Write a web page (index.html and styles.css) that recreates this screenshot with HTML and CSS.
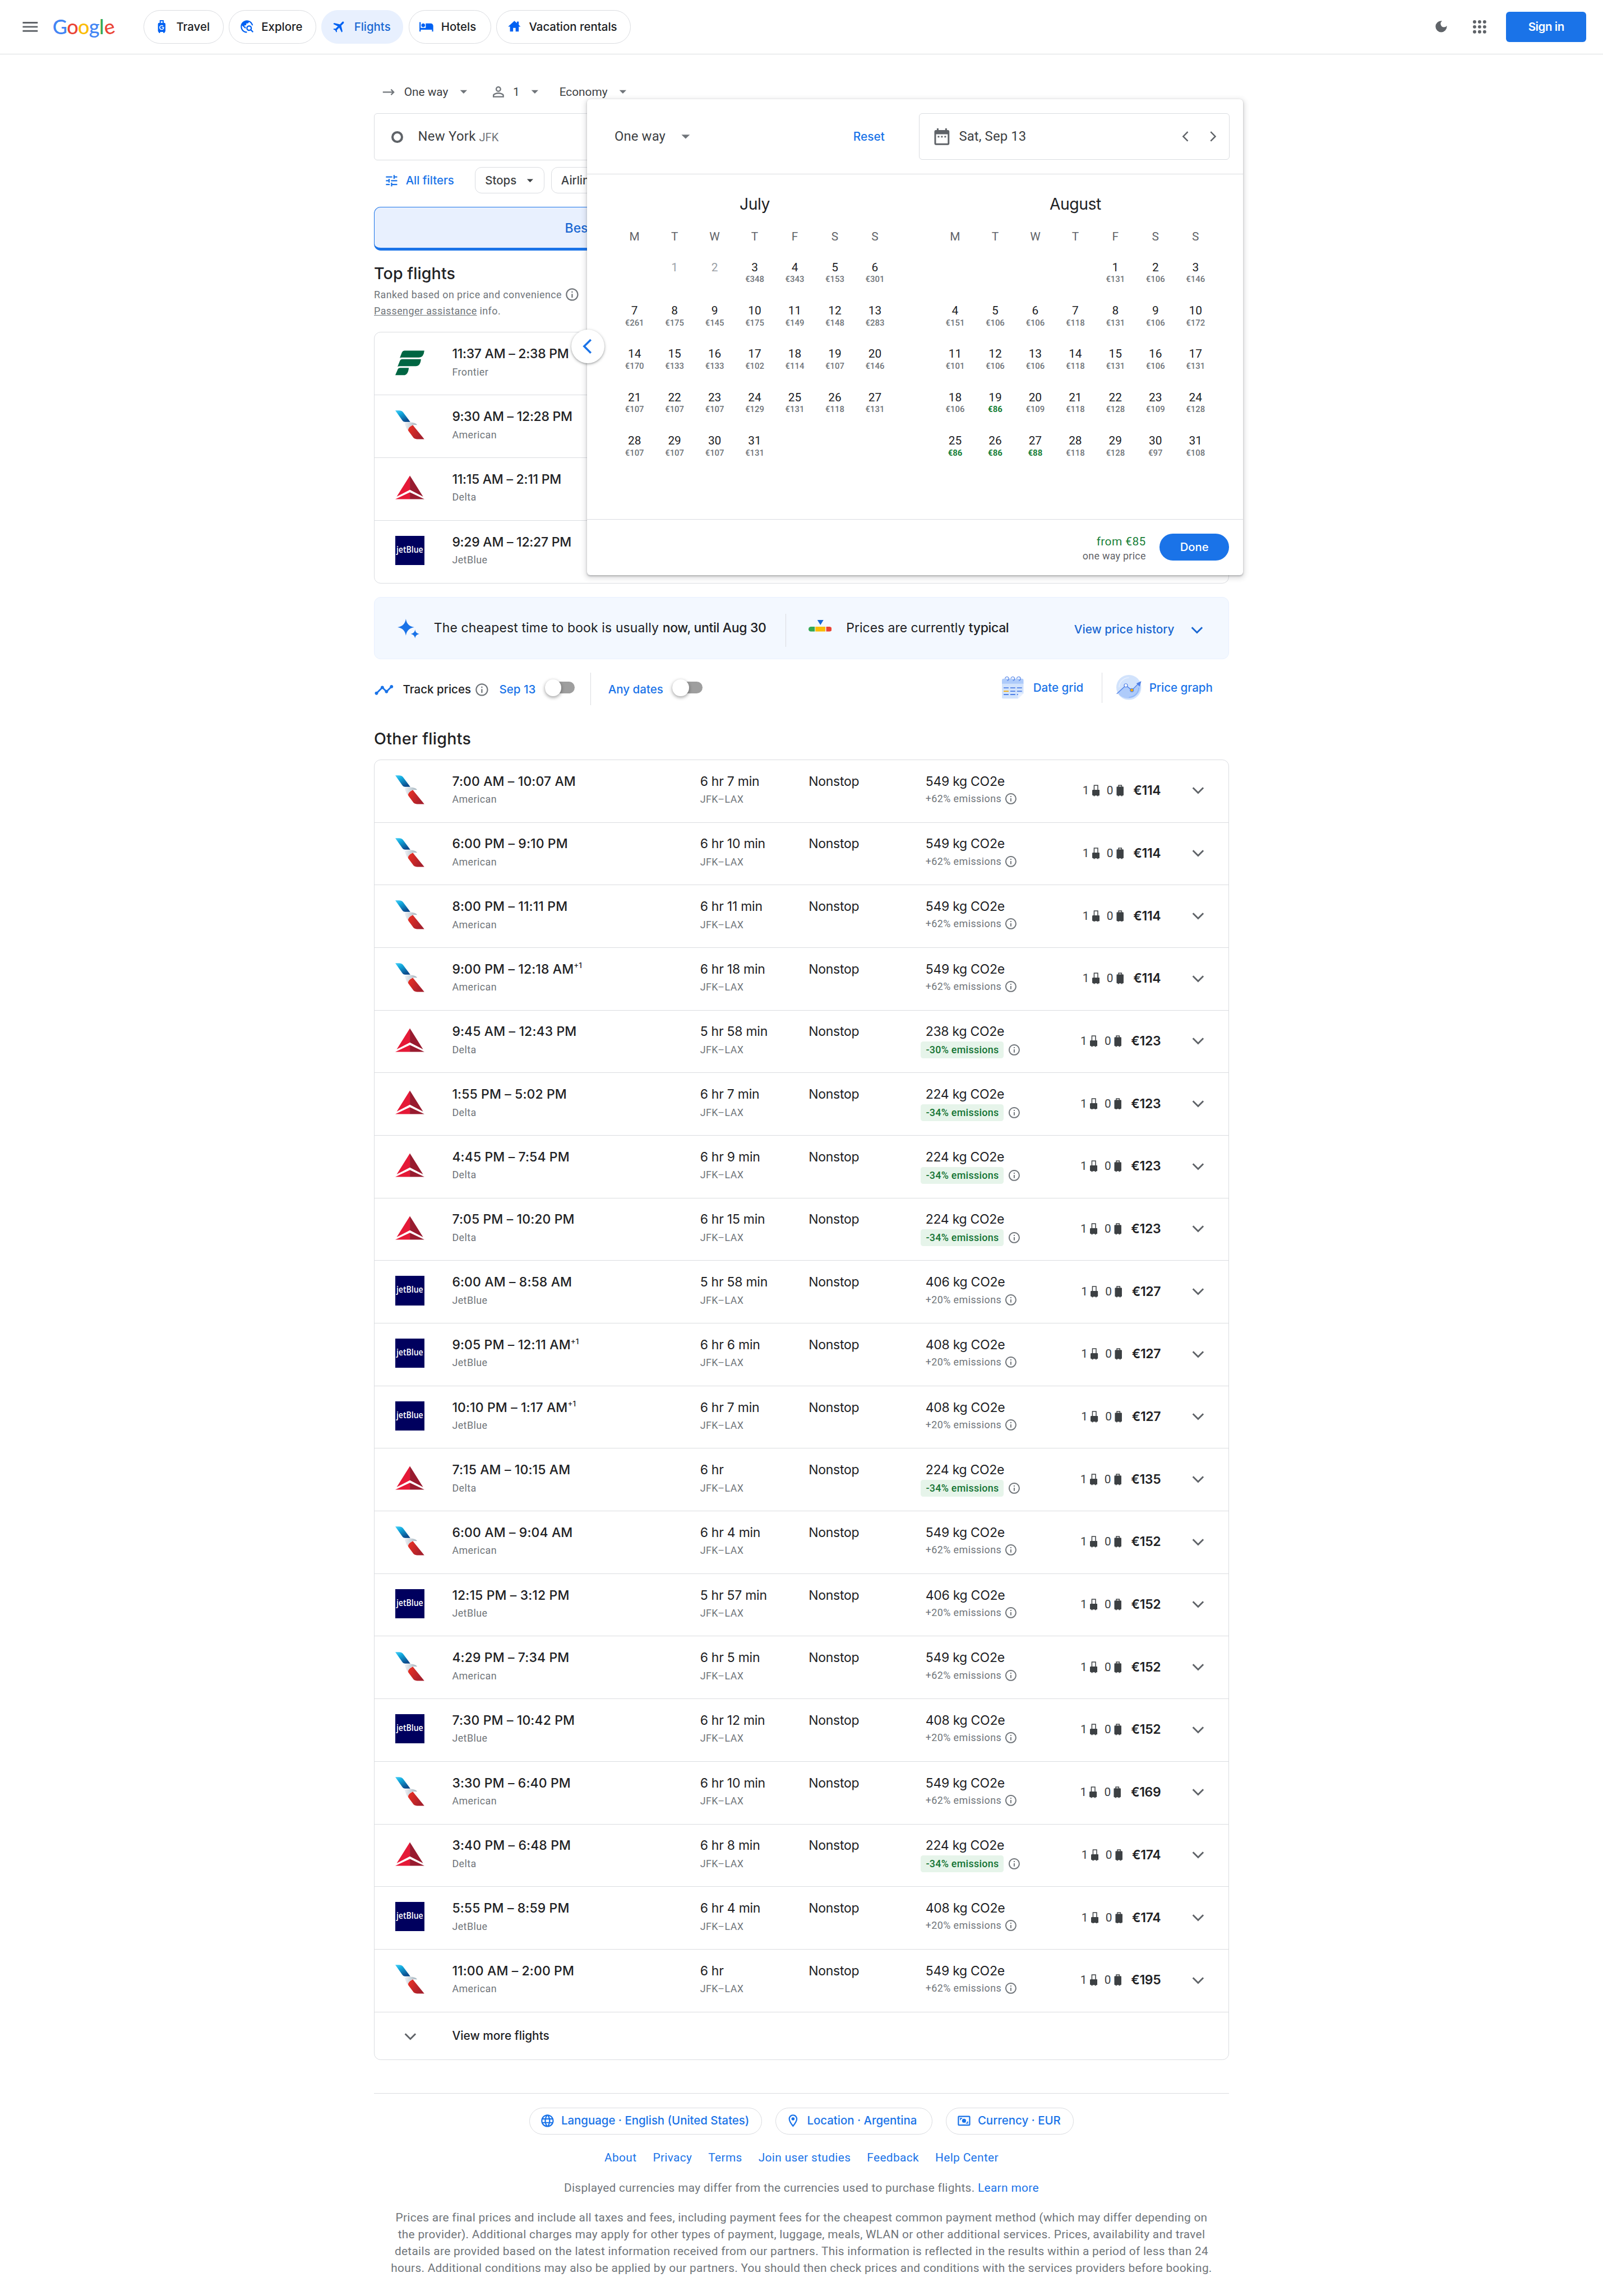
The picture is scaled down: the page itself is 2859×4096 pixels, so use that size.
FILE: index.html
```
<!DOCTYPE html>
<html lang="en">
<head>
<meta charset="utf-8">
<title>New York to Los Angeles | Google Flights</title>
<link rel="stylesheet" href="styles.css">
</head>
<body>
<svg class="defs" aria-hidden="true">
  <defs>
    <linearGradient id="aaBlue" x1="0" y1="0" x2=".6" y2="1"><stop offset="0" stop-color="#4ad0f7"/><stop offset=".35" stop-color="#12a9dd"/><stop offset="1" stop-color="#0b4a8c"/></linearGradient>
    <linearGradient id="aaGray" x1="0" y1="0" x2="1" y2="0"><stop offset="0" stop-color="#eef1f6"/><stop offset="1" stop-color="#a3b3bc"/></linearGradient>
    <linearGradient id="aaRed" x1="0" y1="0" x2="1" y2=".5"><stop offset="0" stop-color="#ee3124"/><stop offset="1" stop-color="#a51f2c"/></linearGradient>
  </defs>
  <symbol id="menu" viewBox="0 0 24 24"><path d="M3 18h18v-2H3v2zm0-5h18v-2H3v2zm0-7v2h18V6H3z"/></symbol>
  <symbol id="travel" viewBox="0 0 24 24"><path d="M8.8 7V1.9h6.4V7h-1.7V3.6h-3V7z"/><path d="M8 6h8a2 2 0 0 1 2 2v11a1.6 1.6 0 0 1-1 1.5l-.8 1.9H15l-.8-1.9H9.800L9 22.400H7.800L7 20.500A1.600 1.600 0 0 1 6 19V8a2 2 0 0 1 2-2z"/><path d="M14.300 11.200a3.200 3.200 0 1 0 .9 2.200h-3" fill="none" stroke="#fff" stroke-width="1.400"/></symbol>
  <symbol id="explore" viewBox="0 0 24 24"><path d="M19.300 16.900c.4-.7.7-1.500.7-2.400 0-2.500-2-4.500-4.500-4.500S11 12 11 14.500s2 4.500 4.500 4.500c.9 0 1.700-.3 2.400-.7l3.200 3.200 1.400-1.400-3.200-3.200zm-3.800.1c-1.400 0-2.500-1.100-2.500-2.500s1.100-2.500 2.500-2.500 2.500 1.100 2.500 2.500-1.100 2.500-2.500 2.500zM12 20v2C6.480 22 2 17.520 2 12S6.480 2 12 2c4.840 0 8.870 3.440 9.800 8h-2.070c-.64-2.460-2.400-4.470-4.730-5.410V5c0 1.100-.9 2-2 2h-2v2c0 .55-.45 1-1 1H8v2h2v3H9l-4.790-4.790C4.080 10.790 4 11.380 4 12c0 4.410 3.590 8 8 8z"/></symbol>
  <symbol id="plane" viewBox="0 0 24 24"><path transform="rotate(45 12 12)" d="M21 16v-2l-8-5V3.500c0-.83-.67-1.500-1.500-1.500S10 2.670 10 3.500V9l-8 5v2l8-2.500V19l-2 1.500V22l3.500-1 3.500 1v-1.500L13 19v-5.500l8 2.500z"/></symbol>
  <symbol id="hotel" viewBox="0 0 24 24"><path d="M7 13c1.660 0 3-1.340 3-3S8.660 7 7 7s-3 1.340-3 3 1.340 3 3 3zm12-6h-8v7H3V5H1v15h2v-3h18v3h2v-9c0-2.210-1.790-4-4-4z"/></symbol>
  <symbol id="house" viewBox="0 0 24 24"><path d="M19 9.300V4h-3v2.600L12 3 2 12h3v8h5v-6h4v6h5v-8h3l-3-2.700z"/></symbol>
  <symbol id="moon" viewBox="0 0 24 24"><path d="M12 3a9 9 0 1 0 9 9c0-.46-.04-.92-.1-1.360a5.389 5.389 0 0 1-4.400 2.260 5.403 5.403 0 0 1-3.140-9.800c-.44-.06-.9-.1-1.360-.1z"/></symbol>
  <symbol id="apps" viewBox="0 0 24 24"><circle cx="6" cy="6" r="2"/><circle cx="12" cy="6" r="2"/><circle cx="18" cy="6" r="2"/><circle cx="6" cy="12" r="2"/><circle cx="12" cy="12" r="2"/><circle cx="18" cy="12" r="2"/><circle cx="6" cy="18" r="2"/><circle cx="12" cy="18" r="2"/><circle cx="18" cy="18" r="2"/></symbol>
  <symbol id="arrow" viewBox="0 0 24 24"><path d="M2.500 11v2h14.900l-2.500 2.600 1.400 1.400 5-5-5-5-1.400 1.400 2.500 2.600z"/></symbol>
  <symbol id="person" viewBox="0 0 24 24"><path d="M12 5.900a2.100 2.100 0 1 1 0 4.200 2.100 2.100 0 0 1 0-4.200m0 9c2.970 0 6.100 1.460 6.100 2.100v1.100H5.900V17c0-.64 3.130-2.100 6.100-2.100M12 4C9.790 4 8 5.790 8 8s1.790 4 4 4 4-1.790 4-4-1.790-4-4-4zm0 9c-2.670 0-8 1.340-8 4v3h16v-3c0-2.660-5.330-4-8-4z"/></symbol>
  <symbol id="caret" viewBox="0 0 24 24"><path d="M7 9.500l5 5 5-5z"/></symbol>
  <symbol id="tune" viewBox="0 0 24 24"><path d="M3 17v2h6v-2H3zM3 5v2h10V5H3zm10 16v-2h8v-2h-8v-2h-2v6h2zM7 9v2H3v2h4v2h2V9H7zm14 4v-2H11v2h10zm-6-4h2V7h4V5h-4V3h-2v6z"/></symbol>
  <symbol id="info" viewBox="0 0 24 24"><path d="M11 7h2v2h-2zm0 4h2v6h-2zm1-9C6.480 2 2 6.480 2 12s4.480 10 10 10 10-4.480 10-10S17.520 2 12 2zm0 18c-4.410 0-8-3.590-8-8s3.590-8 8-8 8 3.590 8 8-3.590 8-8 8z"/></symbol>
  <symbol id="event" viewBox="0 0 24 24"><path d="M19 4h-1V2h-2v2H8V2H6v2H5a2 2 0 0 0-2 2v14a2 2 0 0 0 2 2h14a2 2 0 0 0 2-2V6a2 2 0 0 0-2-2zm0 16H5V9h14v11zM7 11h2v2H7zm4 0h2v2h-2zm4 0h2v2h-2z"/></symbol>
  <symbol id="left" viewBox="0 0 24 24"><path d="M15 6l-6 6 6 6" fill="none" stroke="currentColor" stroke-width="1.800"/></symbol>
  <symbol id="right" viewBox="0 0 24 24"><path d="M9 6l6 6-6 6" fill="none" stroke="currentColor" stroke-width="1.800"/></symbol>
  <symbol id="down" viewBox="0 0 24 24"><path d="M5.800 8.900l6.200 6.200 6.200-6.200" fill="none" stroke="currentColor" stroke-width="2"/></symbol>
  <symbol id="spark" viewBox="0 0 27 24"><path d="M10 0c1 6 4 9 10 10-6 1-9 4-10 10-1-6-4-9-10-10 6-1 9-4 10-10zM21 12.800c.5 3.200 2.100 4.800 5.300 5.300-3.200.5-4.800 2.100-5.300 5.300-.5-3.200-2.100-4.800-5.300-5.300 3.200-.5 4.800-2.100 5.300-5.300z"/></symbol>
  <symbol id="gauge" viewBox="0 0 28 14"><path fill="#1967d2" d="M10.600 0H18l-3.700 6z"/><path fill="#34a853" d="M3 8h4.500v6H3a3 3 0 0 1 0-6z"/><path fill="#fbbc04" d="M8.200 8h12v6h-12z"/><path fill="#ea4335" d="M21.200 8H25a3 3 0 0 1 0 6h-3.800z"/></symbol>
  <symbol id="trend" viewBox="0 0 24 24"><path d="M23 8c0 1.100-.9 2-2 2-.18 0-.35-.02-.51-.07l-3.560 3.550c.05.16.07.34.07.52 0 1.100-.9 2-2 2s-2-.9-2-2c0-.18.02-.36.07-.52l-2.550-2.550c-.16.05-.34.07-.52.07s-.36-.02-.52-.07l-4.550 4.560c.05.16.07.33.07.51 0 1.100-.9 2-2 2s-2-.9-2-2 .9-2 2-2c.18 0 .35.02.51.07l4.560-4.550C8.020 9.360 8 9.180 8 9c0-1.100.9-2 2-2s2 .9 2 2c0 .18-.02.36-.07.52l2.550 2.550c.16-.05.34-.07.52-.07s.36.02.52.07l3.550-3.560C19.020 8.350 19 8.180 19 8c0-1.100.9-2 2-2s2 .9 2 2z"/></symbol>
  <symbol id="grid" viewBox="0 0 26 26.500"><path fill="#d2e3fc" d="M0 8h26v12l-7 6.500H1.500A1.500 1.500 0 0 1 0 25z"/><path fill="#aecbfa" d="M2 2.500h22a2 2 0 0 1 2 2v4H0v-4a2 2 0 0 1 2-2z"/><path fill="#e8f0fe" d="M26 20l-7 6.500V21.500a1.500 1.500 0 0 1 1.500-1.500z"/><g fill="none" stroke="#4f80e6"><path stroke-width=".8" d="M3.800 2.500A2.200 2.200 0 1 1 6 4.700M10.800 2.500A2.200 2.200 0 1 1 13 4.700M17.800 2.500A2.200 2.200 0 1 1 20 4.700"/><path stroke-width="1.200" d="M2 13.500h6M10 13.500h6M18 13.500h6M10 17.500h6M18 17.500h6M2 21.500h6M10 21.500h6M18 21.500h1.300"/><path stroke="#f9ab00" stroke-width="1.200" d="M2 17.500h6"/></g></symbol>
  <symbol id="graph" viewBox="0 0 30 30"><circle cx="15" cy="15" r="15" fill="#d2e3fc"/><path fill="#aecbfa" d="M1.800 21.800L11.400 12.600l7.200 5.700 9.800-9.600A15 15 0 0 1 1.800 21.800z"/><path d="M3.300 15A11.700 11.700 0 0 1 15 3.300" fill="none" stroke="#e8f0fe"/><path d="M26.800 15.300A11.800 11.800 0 0 1 15 26.800" fill="none" stroke="#8ab4f8"/><path d="M.5 22.700L11.400 12.600l7.200 5.700L27 10" fill="none" stroke="#4f80e6" stroke-width=".9"/><path fill="#4f80e6" d="M30 7.400l-6 2.800 4 3.800z"/><circle cx="11.400" cy="12.600" r="2" fill="#fff" stroke="#4f80e6" stroke-width=".8"/><circle cx="18.600" cy="18.300" r="2" fill="#f9ab00" stroke="#4f80e6" stroke-width=".8"/></symbol>
  <symbol id="globe" viewBox="0 0 24 24"><path d="M11.990 2C6.470 2 2 6.480 2 12s4.470 10 9.990 10C17.520 22 22 17.520 22 12S17.520 2 11.990 2zm6.930 6h-2.950c-.32-1.250-.78-2.450-1.380-3.560 1.840.63 3.370 1.910 4.330 3.560zM12 4.040c.83 1.200 1.480 2.530 1.910 3.960h-3.820c.43-1.430 1.080-2.760 1.910-3.960zM4.260 14C4.100 13.360 4 12.690 4 12s.1-1.360.26-2h3.380c-.08.66-.14 1.320-.14 2s.06 1.340.14 2H4.260zm.82 2h2.950c.32 1.250.78 2.450 1.380 3.560-1.840-.63-3.370-1.900-4.330-3.560zm2.950-8H5.080c.96-1.660 2.490-2.930 4.330-3.560C8.810 5.550 8.350 6.750 8.030 8zM12 19.960c-.83-1.200-1.480-2.530-1.910-3.960h3.820c-.43 1.430-1.080 2.760-1.910 3.960zM14.340 14H9.660c-.09-.66-.16-1.320-.16-2s.07-1.350.16-2h4.680c.09.65.16 1.320.16 2s-.07 1.340-.16 2zm.25 5.560c.6-1.110 1.060-2.310 1.380-3.560h2.950c-.96 1.650-2.490 2.930-4.330 3.560zM16.360 14c.08-.66.14-1.320.14-2s-.06-1.340-.14-2h3.380c.16.64.26 1.310.26 2s-.1 1.360-.26 2h-3.380z"/></symbol>
  <symbol id="pin" viewBox="0 0 24 24"><path d="M12 2C8.130 2 5 5.130 5 9c0 5.250 7 13 7 13s7-7.750 7-13c0-3.870-3.130-7-7-7zM7 9c0-2.760 2.240-5 5-5s5 2.240 5 5c0 2.880-2.880 7.190-5 9.880C9.920 16.210 7 11.850 7 9z"/><circle cx="12" cy="9" r="2.500"/></symbol>
  <symbol id="cash" viewBox="0 0 24 24"><path d="M20 4H4a2 2 0 0 0-2 2v12a2 2 0 0 0 2 2h16a2 2 0 0 0 2-2V6a2 2 0 0 0-2-2zm0 14H4V6h16z"/><circle cx="12" cy="12" r="3.200"/><path d="M5.500 11V7.500H9V9H7v2zM18.500 13v3.500H15V15h2v-2z"/></symbol>
  <symbol id="carry" viewBox="0 0 9 14"><path d="M2.300 6.500V.7h4.400v5.800" fill="none" stroke="currentColor"/><path d="M1 6h7a1 1 0 0 1 1 1v5a1 1 0 0 1-1 1H7.300v.8H5.900V13H3.100v.8H1.700V13H1a1 1 0 0 1-1-1V7a1 1 0 0 1 1-1z"/></symbol>
  <symbol id="bag" viewBox="0 0 9 14"><path d="M2.700 2.500V.7h3.600v1.800" fill="none" stroke="currentColor"/><path d="M1.200 2.200h6.600a.9.9 0 0 1 .9.9v9a.9.9 0 0 1-.9.9H7.200v.8H5.800V13H3.200v.8H1.800V13h-.6a.9.9 0 0 1-.9-.9v-9a.9.9 0 0 1 .9-.9z"/></symbol>
  <symbol id="Frontier" viewBox="0 0 35 35"><g fill="#006643"><path d="M5.400 11.800L8 5Q9 3 11 3H34.800Q34 11.200 28.500 11.200H8Q6 11.200 5.400 11.800z"/><path d="M2.700 22.300L5.500 15.200Q6.300 13.200 8.500 13.200H30.800Q30 21.600 24.500 21.600H5.500Q3.600 21.600 2.700 22.300z"/><path d="M0 32.400L2.800 25.800Q3.600 23.600 6 23.600H16.200Q15.400 32.400 10 32.400z"/></g></symbol>
  <symbol id="American" viewBox="0 0 35 35"><path fill="url(#aaBlue)" d="M0 .2H4Q8.200.2 10 3.200L18 14H12Q9.500 14 8.300 12z"/><path fill="url(#aaGray)" d="M11.200 16Q12.500 14.500 17 14.500 24 14.200 26.200 17.600 21 17 19.500 18.200 15.500 20 15 24.500L13.200 21z"/><path fill="url(#aaRed)" d="M21 17.700L34.800 34.600H26Q22.500 34.600 20.600 31.300L15.600 24.500Q14.300 21 21 17.700z"/></symbol>
  <symbol id="Delta" viewBox="0 0 35 35"><path fill="#e51937" d="M17.500 3v17L1.700 28.200zM17.500 23v8.300H0z"/><path fill="#981b2f" d="M17.500 3v17l15.800 8.200zM17.500 23v8.300H35z"/></symbol>
</svg>

<header class="topbar">
  <svg class="i24"><use href="#menu"/></svg>
  <div class="logo" aria-label="Google"><span class="g-blue">G</span><span class="g-red">o</span><span class="g-yellow">o</span><span class="g-blue">g</span><span class="g-green">l</span><span class="g-red g-e">e</span></div>
  <nav class="nav">
    <a class="pill w-travel"><svg class="i18"><use href="#travel"/></svg><span>Travel</span></a>
    <a class="pill w-explore"><svg class="i18"><use href="#explore"/></svg><span>Explore</span></a>
    <a class="pill w-flights on"><svg class="i18"><use href="#plane"/></svg><span>Flights</span></a>
    <a class="pill w-hotels"><svg class="i18"><use href="#hotel"/></svg><span>Hotels</span></a>
    <a class="pill w-rentals"><svg class="i18"><use href="#house"/></svg><span>Vacation rentals</span></a>
  </nav>
  <div class="account">
    <svg class="i18"><use href="#moon"/></svg>
    <svg class="i24"><use href="#apps"/></svg>
    <a class="signin"><span>Sign in</span></a>
  </div>
</header>

<main class="main">
  <div class="trip">
    <div class="opt opt-way"><svg class="i18"><use href="#arrow"/></svg><span>One way</span><svg class="i20"><use href="#caret"/></svg></div>
    <div class="opt opt-people"><svg class="i20"><use href="#person"/></svg><span>1</span><svg class="i20"><use href="#caret"/></svg></div>
    <div class="opt opt-class"><span>Economy</span><svg class="i20"><use href="#caret"/></svg></div>
  </div>

  <div class="field"><span class="ring"></span><span class="city">New York</span><span class="code">JFK</span></div>

  <div class="filters">
    <div class="all"><svg class="i18"><use href="#tune"/></svg><span>All filters</span></div>
    <div class="chip"><span>Stops</span><svg class="i18"><use href="#caret"/></svg></div>
    <div class="chip"><span>Airlines</span><svg class="i18"><use href="#caret"/></svg></div>
  </div>

  <div class="tabs"><div class="tab"><span>Best</span></div></div>

  <h2 class="heading">Top flights</h2>
  <div class="note"><span>Ranked based on price and convenience</span><svg class="i18"><use href="#info"/></svg></div>
  <div class="note"><span><u>Passenger assistance</u> info.</span></div>

  <section class="card card-top" id="top"></section>

  <section class="banner">
    <svg class="spark"><use href="#spark"/></svg>
    <p class="b-book">The cheapest time to book is usually <b>now, until Aug 30</b></p>
    <svg class="gauge"><use href="#gauge"/></svg>
    <p class="b-typ">Prices are currently <b>typical</b></p>
    <div class="history"><span>View price history</span><svg class="i24"><use href="#down"/></svg></div>
  </section>

  <section class="tools">
    <div class="track">
      <svg class="i24 blue"><use href="#trend"/></svg><span class="t-label">Track prices</span><svg class="i18 gray"><use href="#info"/></svg>
      <span class="t-date">Sep 13</span><i class="toggle"></i>
    </div>
    <div class="any"><span>Any dates</span><i class="toggle"></i></div>
    <div class="views">
      <div class="v-grid"><svg class="gridicon"><use href="#grid"/></svg><span>Date grid</span></div>
      <div class="v-graph"><svg class="graphicon"><use href="#graph"/></svg><span>Price graph</span></div>
    </div>
  </section>

  <h2 class="heading other">Other flights</h2>
  <section class="card card-other" id="others"></section>

  <footer class="footer">
    <div class="fpills">
      <a class="fpill f1"><svg class="i18"><use href="#globe"/></svg><span>Language · English (United States)</span></a>
      <a class="fpill f2"><svg class="i18"><use href="#pin"/></svg><span>Location · Argentina</span></a>
      <a class="fpill f3"><svg class="i18"><use href="#cash"/></svg><span>Currency · EUR</span></a>
    </div>
    <div class="links"><a>About</a><a>Privacy</a><a>Terms</a><a>Join user studies</a><a>Feedback</a><a>Help Center</a></div>
    <p class="fine">Displayed currencies may differ from the currencies used to purchase flights. <a>Learn more</a></p>
    <p class="fine"><span>Prices are final prices and include all taxes and fees, including payment fees for the cheapest common payment method (which may differ depending on</span><br><span>the provider). Additional charges may apply for other types of payment, luggage, meals, WLAN or other additional services. Prices, availability and travel</span><br><span>details are provided based on the latest information received from our partners. This information is reflected in the results within a period of less than 24</span><br><span>hours. Additional conditions may also be applied by our partners. You should then check prices and conditions with the services providers before booking.</span></p>
  </footer>
</main>

<aside class="picker">
  <div class="p-head">
    <div class="p-way"><span>One way</span><svg class="i24"><use href="#caret"/></svg></div>
    <span class="p-reset">Reset</span>
    <div class="p-date"><svg class="i24"><use href="#event"/></svg><span>Sat, Sep 13</span><svg class="i22"><use href="#left"/></svg><svg class="i22"><use href="#right"/></svg></div>
  </div>
  <div class="p-body" id="months"></div>
  <div class="p-foot">
    <div class="p-sum"><span class="p-from">from €85</span><span class="p-sub">one way price</span></div>
    <a class="done"><span>Done</span></a>
  </div>
  <div class="p-prev"><svg class="i32"><use href="#left"/></svg></div>
</aside>
<script src="app.js"></script>
</body>
</html>
```
FILE: styles.css
```
/* 1rem = 10 layout pixels on a 1920-wide page */
html { font-size: 14.8906px; }
* { box-sizing: border-box; margin: 0; padding: 0; }
body { position: relative; width: 192rem; height: 4096px; overflow: hidden; background: #fff; color: #202124; font-family: Roboto, sans-serif; font-size: 1.4rem; line-height: 1; }
.defs { position: absolute; width: 0; height: 0; }
svg { display: block; flex: none; fill: currentColor; }
span { white-space: nowrap; }
.i16 { width: 1.6rem; height: 1.6rem; }
.i18 { width: 1.8rem; height: 1.8rem; }
.i20 { width: 2rem; height: 2rem; }
.i22 { width: 2.2rem; height: 2.2rem; }
.i24 { width: 2.4rem; height: 2.4rem; }
.i32 { width: 3.2rem; height: 3.2rem; }
.blue { color: #1a73e8; }
.gray { color: #70757a; }

/* header */
.topbar { display: flex; align-items: center; height: 6.5rem; padding: 0 2rem 0 2.4rem; border-bottom: 1px solid #dadce0; color: #5f6368; }
.logo { display: flex; align-items: baseline; width: 7.4rem; margin-left: 1.5rem; padding-bottom: .1rem; font: 500 2.42rem/3rem Lato, sans-serif; letter-spacing: -.05rem; }
.g-blue { color: #4285f4; } .g-red { color: #ea4335; } .g-yellow { color: #fbbc05; } .g-green { color: #34a853; }
.g-e { transform: rotate(-14deg); }
.nav { display: flex; gap: .62rem; margin-left: 3.5rem; font: 500 1.37rem/1 Inter, sans-serif; }
.pill { display: flex; align-items: center; gap: .85rem; height: 4rem; padding-left: 1.2rem; border: 1px solid #dadce0; border-radius: 2rem; color: #202124; }
.pill svg { color: #0061f2; }
.pill.on { background: #e8f0fe; border-color: #e8f0fe; color: #1967d2; }
.w-travel { width: 9.58rem; } .w-explore { width: 10.49rem; } .w-flights { width: 9.8rem; } .w-hotels { width: 9.9rem; } .w-rentals { width: 16.1rem; }
.account { display: flex; align-items: center; margin-left: auto; }
.account .i24 { margin: 0 2rem 0 2.5rem; }
.signin { display: flex; align-items: center; justify-content: center; width: 9.6rem; height: 3.6rem; border-radius: .4rem; background: #1a73e8; color: #fff; font: 600 1.38rem/1 Inter, sans-serif; letter-spacing: -.03rem; }

/* search form */
.main { width: 102.4rem; margin: 0 auto; }
.trip { display: flex; height: 4rem; margin-top: 2.5rem; padding-top: .08rem; color: #3c4043; }
.opt { display: flex; align-items: center; }
.opt svg { color: #70757a; }
.opt-way { width: 13.9rem; padding-left: .9rem; }
.opt-way span { width: 6.1rem; margin-left: .9rem; }
.opt-people { width: 8.3rem; }
.opt-people span { width: 1.6rem; margin-left: .75rem; }
.opt-class span { width: 6.6rem; }
.field { display: flex; align-items: center; height: 5.6rem; margin-top: .6rem; padding-left: 2rem; border: 1px solid #dadce0; border-radius: .4rem; color: #3c4043; }
.ring { width: 1.4rem; height: 1.4rem; border: .27rem solid #5f6368; border-radius: 50%; }
.city { margin-left: 1.8rem; font-size: 1.6rem; letter-spacing: .02rem; }
.code { margin-left: .4rem; padding-top: .1rem; font-size: 1.35rem; color: #70757a; }
.filters { display: flex; gap: .8rem; height: 3.2rem; margin-top: .8rem; font: 500 1.37rem/1 Inter, sans-serif; }
.all { display: flex; align-items: center; width: 11.3rem; padding: .08rem 0 0 1.2rem; color: #1a73e8; }
.all span { margin-left: .8rem; }
.chip { display: flex; align-items: center; width: 8.3rem; padding: .08rem 0 0 1.15rem; border: 1px solid #dadce0; border-radius: .8rem; color: #3c4043; }
.chip:last-child { width: 10rem; }
.chip span { width: 4.5rem; }
.tabs { height: 5.2rem; margin-top: 1.6rem; }
.tab { width: 51.2rem; height: 100%; padding: 1.75rem 0 0 22.8rem; border: 1px solid #1a73e8; border-bottom-width: .4rem; border-radius: .8rem 0 0 .8rem; background: #e8f0fe; color: #1967d2; font: 500 1.54rem/1 Inter, sans-serif; }
.heading { margin-top: 1.35rem; font: 500 1.92rem/2.8rem Inter, sans-serif; letter-spacing: .005rem; }
.note { display: flex; align-items: center; height: 2rem; font-size: 1.2rem; letter-spacing: .03rem; color: #70757a; }
.heading + .note { margin-top: .15rem; }
.note svg { margin-left: .35rem; }

/* flight lists */
.card { display: flex; flex-direction: column; border: 1px solid #dadce0; border-radius: .8rem; }
.card-top { height: 30.1rem; margin-top: 1.5rem; }
.card-other { height: 155.8rem; margin-top: 1.1rem; }
.row { display: grid; flex: 1; grid-template-columns: 6.84rem 29.7rem 13rem 14rem 14rem 14.18rem 1fr; padding-left: 2.45rem; border-bottom: 1px solid #dadce0; }
.row:last-child { border-bottom: 0; }
.air { width: 3.5rem; height: 3.5rem; margin-top: 1.82rem; }
.jet { display: flex; justify-content: center; background: #00005e; color: #fff; font: 600 1.1rem/3.3rem "Open Sans", sans-serif; }
.jet span { transform: scaleX(.86); }
.big { height: 2rem; margin-top: 1.6rem; font: 400 1.54rem/2rem Inter, sans-serif; letter-spacing: -.015rem; }
.time { font-weight: 500; letter-spacing: .01rem; }
.card-top .time { letter-spacing: -.015rem; }
.time sup { position: relative; top: -.62rem; font-size: .9rem; line-height: 0; vertical-align: baseline; letter-spacing: 0; }
.small { height: 2rem; margin-top: .12rem; font-size: 1.2rem; line-height: 2rem; letter-spacing: .03rem; color: #70757a; }
.emis { display: flex; align-items: center; height: 2rem; margin-top: .05rem; color: #70757a; font-size: 1.2rem; letter-spacing: .03rem; }
.emis svg { margin-left: .3rem; }
.emis.low span { height: 2rem; margin: .1rem 0 -.1rem -.55rem; padding: 0 .6rem; border-radius: .3rem; background: #e6f4ea; color: #137333; font-weight: 500; line-height: 2rem; letter-spacing: .02rem; }
.emis.low svg { margin: .1rem 0 -.1rem .45rem; }
.fare { display: flex; align-items: center; justify-content: flex-end; height: 2.4rem; margin-top: 2.48rem; color: #3c4043; }
.fare svg { width: .9rem; height: 1.4rem; margin-left: .35rem; }
.fare svg + span { margin-left: .85rem; }
.fare .price { margin-left: 1.15rem; color: #202124; font: 600 1.54rem/1 Inter, sans-serif; letter-spacing: -.02rem; }
.row > .i24 { margin: 2.46rem 0 0 3.25rem; color: #5f6368; }
.more { display: flex; flex: none; align-items: center; height: 5.65rem; padding: .1rem 0 0 3.05rem; font: 500 1.4rem/1 Inter, sans-serif; }
.more svg { color: #5f6368; }
.more span { margin-left: 3.85rem; }

/* price insight */
.banner { display: flex; height: 7.5rem; margin-top: 1.6rem; padding-left: 2.75rem; border: 1px solid #e8f0fe; border-radius: .8rem; background: #f3f8ff; font: 400 1.54rem/2rem Inter, sans-serif; }
.banner b { font-weight: 500; letter-spacing: -.02rem; }
.spark { width: 2.7rem; height: 2.4rem; margin-top: 2.6rem; color: #1a73e8; }
.b-book { width: 42.2rem; margin: 1.95rem 0 1.45rem 1.65rem; padding-top: .8rem; border-right: 1px solid #dadce0; white-space: nowrap; letter-spacing: .01rem; }
.gauge { width: 2.8rem; height: 1.4rem; margin: 2.7rem 0 0 2.65rem; }
.b-typ { width: 27.3rem; margin: 2.75rem 0 0 1.75rem; white-space: nowrap; }
.history { display: flex; align-items: center; height: 2.4rem; margin-top: 2.7rem; color: #1967d2; font: 500 1.39rem/1 Inter, sans-serif; }
.history span { width: 13.5rem; }

.tools { display: flex; height: 3.9rem; margin-top: 1.6rem; font: 500 1.38rem/1 Inter, sans-serif; }
.track, .any, .v-grid, .v-graph { display: flex; align-items: center; }
.track { width: 26rem; border-right: 1px solid #dadce0; }
.track span, .track svg, .any span { position: relative; top: .1rem; }
.t-label { width: 8.55rem; margin-left: 1.05rem; }
.t-date { width: 5.45rem; margin-left: 1.2rem; color: #1a73e8; }
.any { padding-left: 2.05rem; color: #1a73e8; }
.any span { width: 7.7rem; }
.toggle { position: relative; width: 3.6rem; height: 1.4rem; margin-bottom: .3rem; border-radius: .7rem; background: #9e9e9e; }
.toggle::before { content: ""; position: absolute; left: 0; top: -.3rem; width: 2rem; height: 2rem; border-radius: 50%; background: #fff; box-shadow: 0 .15rem .4rem rgba(0,0,0,.4); }
.views { display: flex; height: 3.6rem; margin-left: auto; color: #1a73e8; }
.v-grid { width: 12rem; border-right: 1px solid #dadce0; }
.gridicon { width: 2.6rem; height: 2.65rem; }
.v-grid span { margin-left: 1.15rem; }
.v-graph { width: 15.2rem; padding-left: 1.7rem; }
.graphicon { width: 3rem; height: 3rem; }
.v-graph span { margin-left: .95rem; }
.other { margin-top: 2.6rem; letter-spacing: .02rem; }

/* footer */
.footer { margin-top: 4rem; border-top: 1px solid #dadce0; text-align: center; }
.fpills { display: flex; justify-content: center; gap: 1.6rem; margin-top: 1.65rem; font: 500 1.37rem/1 Inter, sans-serif; color: #1a73e8; }
.fpill { display: flex; align-items: center; gap: .75rem; height: 3.2rem; padding-left: 1.2rem; border: 1px solid #dadce0; border-radius: 1.6rem; }
.f1 { width: 27.85rem; } .f2 { width: 18.85rem; } .f3 { width: 15.3rem; }
.links { display: flex; justify-content: center; gap: 1.95rem; margin-top: 1.85rem; line-height: 2rem; letter-spacing: .025rem; color: #1a73e8; }
.fine { margin-top: 1.6rem; line-height: 2rem; letter-spacing: .02rem; color: #70757a; }
.fine a { color: #1a73e8; letter-spacing: .025rem; }

/* date picker */
.picker { position: absolute; left: 70.3rem; top: 11.9rem; width: 78.6rem; height: 57rem; border-radius: .4rem; background: #fff; box-shadow: 0 .2rem .6rem .2rem rgba(60,64,67,.16), 0 .1rem .2rem rgba(60,64,67,.3); }
.p-head { display: flex; align-items: center; height: 9rem; padding-left: 3.3rem; border-bottom: 1px solid #dadce0; color: #3c4043; }
.p-way { display: flex; align-items: center; width: 28.6rem; font-size: 1.6rem; }
.p-way span { width: 7.35rem; letter-spacing: .01rem; }
.p-way svg { color: #70757a; }
.p-reset { width: 7.85rem; color: #1a73e8; font: 500 1.4rem/1 Inter, sans-serif; padding-top: .1rem; }
.p-date { display: flex; align-items: center; width: 37.2rem; height: 5.6rem; padding-left: 1.5rem; border: 1px solid #dadce0; border-radius: .4rem; font-size: 1.6rem; }
.p-date svg { color: #5f6368; }
.p-date span { width: 26.05rem; margin-left: .85rem; letter-spacing: .01rem; }
.p-date .i22 + .i22 { margin-left: 1.05rem; }
.p-body { display: flex; gap: 4.8rem; height: 41.3rem; padding: 2.17rem 0 0 3.3rem; }
.month { width: 33.6rem; text-align: center; }
.month h3 { font: 400 1.9rem/2.8rem Inter, sans-serif; letter-spacing: -.03rem; }
.week { display: grid; grid-template-columns: repeat(7, 4.8rem); }
.dow { height: 2rem; margin: 1.5rem 0 1.9rem; color: #5f6368; line-height: 2rem; }
.day { height: 5.2rem; line-height: 1.6rem; }
.day small { display: block; margin-top: .12rem; font-size: 1rem; font-weight: 500; line-height: 1rem; color: #70757a; }
.day small.cheap { color: #188038; font-weight: 700; }
.day.past { color: #9aa0a6; }
.p-foot { display: flex; justify-content: flex-end; height: 6.7rem; padding: 1.7rem 1.7rem 0 0; border-top: 1px solid #dadce0; }
.p-sum { display: flex; flex-direction: column; align-items: flex-end; margin-right: 1.65rem; }
.p-from { color: #188038; line-height: 1.95rem; letter-spacing: .03rem; }
.p-sub { font-size: 1.2rem; line-height: 1.3rem; letter-spacing: .02rem; color: #5f6368; }
.done { display: flex; align-items: center; justify-content: center; width: 8.3rem; height: 3.2rem; border-radius: 1.6rem; background: #1a73e8; color: #fff; font: 500 1.36rem/1 Inter, sans-serif; }
.p-prev { position: absolute; left: -1.9rem; top: 27.6rem; display: flex; align-items: center; justify-content: center; width: 4rem; height: 4rem; border-radius: 50%; background: #fff; color: #1a73e8; box-shadow: 0 .1rem .3rem .1rem rgba(60,64,67,.18), 0 .1rem .2rem rgba(60,64,67,.3); }
```
FILE: app.js
```
const icon = (name, cls) => `<svg class="${cls}"><use href="#${name}"/></svg>`;

const topFlights = [
  ["Frontier", "11:37 AM – 2:38 PM"],
  ["American", "9:30 AM – 12:28 PM"],
  ["Delta", "11:15 AM – 2:11 PM"],
  ["JetBlue", "9:29 AM – 12:27 PM"],
];

// airline, times, arrives next day, duration, kg CO2e, emissions %, price
const otherFlights = [
  ["American", "7:00 AM – 10:07 AM", 0, "6 hr 7 min", 549, 62, 114],
  ["American", "6:00 PM – 9:10 PM", 0, "6 hr 10 min", 549, 62, 114],
  ["American", "8:00 PM – 11:11 PM", 0, "6 hr 11 min", 549, 62, 114],
  ["American", "9:00 PM – 12:18 AM", 1, "6 hr 18 min", 549, 62, 114],
  ["Delta", "9:45 AM – 12:43 PM", 0, "5 hr 58 min", 238, -30, 123],
  ["Delta", "1:55 PM – 5:02 PM", 0, "6 hr 7 min", 224, -34, 123],
  ["Delta", "4:45 PM – 7:54 PM", 0, "6 hr 9 min", 224, -34, 123],
  ["Delta", "7:05 PM – 10:20 PM", 0, "6 hr 15 min", 224, -34, 123],
  ["JetBlue", "6:00 AM – 8:58 AM", 0, "5 hr 58 min", 406, 20, 127],
  ["JetBlue", "9:05 PM – 12:11 AM", 1, "6 hr 6 min", 408, 20, 127],
  ["JetBlue", "10:10 PM – 1:17 AM", 1, "6 hr 7 min", 408, 20, 127],
  ["Delta", "7:15 AM – 10:15 AM", 0, "6 hr", 224, -34, 135],
  ["American", "6:00 AM – 9:04 AM", 0, "6 hr 4 min", 549, 62, 152],
  ["JetBlue", "12:15 PM – 3:12 PM", 0, "5 hr 57 min", 406, 20, 152],
  ["American", "4:29 PM – 7:34 PM", 0, "6 hr 5 min", 549, 62, 152],
  ["JetBlue", "7:30 PM – 10:42 PM", 0, "6 hr 12 min", 408, 20, 152],
  ["American", "3:30 PM – 6:40 PM", 0, "6 hr 10 min", 549, 62, 169],
  ["Delta", "3:40 PM – 6:48 PM", 0, "6 hr 8 min", 224, -34, 174],
  ["JetBlue", "5:55 PM – 8:59 PM", 0, "6 hr 4 min", 408, 20, 174],
  ["American", "11:00 AM – 2:00 PM", 0, "6 hr", 549, 62, 195],
];

const logo = airline => airline === "JetBlue" ? `<div class="air jet"><span>jetBlue</span></div>` : icon(airline, "air");
const lead = (airline, time, next) => `${logo(airline)}<div><div class="big time"><span>${time}</span>${next ? "<sup>+1</sup>" : ""}</div><div class="small"><span>${airline}</span></div></div>`;

document.getElementById("top").innerHTML = topFlights.map(([a, t]) => `<div class="row">${lead(a, t, 0)}</div>`).join("");

document.getElementById("others").innerHTML = otherFlights.map(([a, t, next, dur, kg, pct, price]) => `<div class="row">${lead(a, t, next)}
<div><div class="big"><span>${dur}</span></div><div class="small"><span>JFK–LAX</span></div></div>
<div class="big"><span>Nonstop</span></div>
<div><div class="big"><span>${kg} kg CO2e</span></div><div class="emis${pct < 0 ? " low" : ""}"><span>${pct > 0 ? "+" : ""}${pct}% emissions</span>${icon("info", "i16")}</div></div>
<div class="fare"><span>1</span>${icon("carry", "luggage")}<span>0</span>${icon("bag", "luggage")}<span class="price">€${price}</span></div>
${icon("down", "i24")}</div>`).join("") + `<div class="more">${icon("down", "i24")}<span>View more flights</span></div>`;

// name, empty cells before the 1st, price per day (0 = in the past)
const months = [
  ["July", 1, [0, 0, 348, 343, 153, 301, 261, 175, 145, 175, 149, 148, 283, 170, 133, 133, 102, 114, 107, 146, 107, 107, 107, 129, 131, 118, 131, 107, 107, 107, 131]],
  ["August", 4, [131, 106, 146, 151, 106, 106, 118, 131, 106, 172, 101, 106, 106, 118, 131, 106, 131, 106, 86, 109, 118, 128, 109, 128, 86, 86, 88, 118, 128, 97, 108]],
];
document.getElementById("months").innerHTML = months.map(([name, blanks, prices]) => `<div class="month"><h3><span>${name}</span></h3>
<div class="week">${[..."MTWTFSS"].map(d => `<div class="dow">${d}</div>`).join("")}${"<div></div>".repeat(blanks)}${prices.map((p, i) => `<div class="day${p ? "" : " past"}">${i + 1}${p ? `<small${p < 90 ? ' class="cheap"' : ""}>€${p}</small>` : ""}</div>`).join("")}</div></div>`).join("");
```
